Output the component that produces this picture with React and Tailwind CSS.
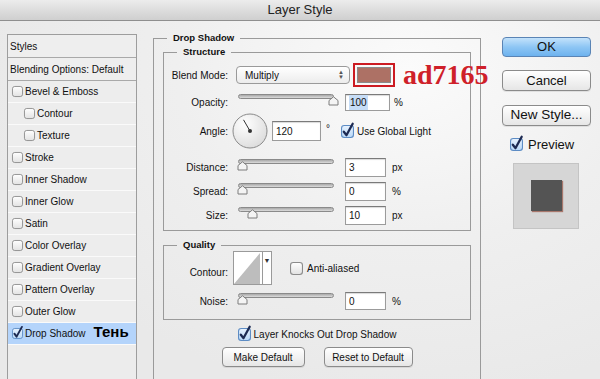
import React from 'react';

const Checkbox = ({ checked = false, size = 12 }) => (
  <svg width={size} height={size} viewBox="0 0 12 12" className="shrink-0 overflow-visible">
    <defs>
      <linearGradient id="cbg" x1="0" y1="0" x2="0" y2="1">
        <stop offset="0" stopColor="#ffffff" />
        <stop offset="1" stopColor="#e2e2e2" />
      </linearGradient>
      <linearGradient id="cbb" x1="0" y1="0" x2="0" y2="1">
        <stop offset="0" stopColor="#e8f3ff" />
        <stop offset="1" stopColor="#b9d8f7" />
      </linearGradient>
    </defs>
    <rect
      x="0.5"
      y="0.5"
      width="11"
      height="11"
      rx="2.5"
      fill={checked ? 'url(#cbb)' : 'url(#cbg)'}
      stroke={checked ? '#5d8cc4' : '#8c8c8c'}
    />
    {checked && (
      <path d="M2.6 6.2 L5 9.4 L10.8 -1.2" fill="none" stroke="#1d2a52" strokeWidth="2.1" strokeLinecap="round" strokeLinejoin="round" />
    )}
  </svg>
);

const Slider = ({ pos = 0 }) => (
  <div className="relative w-[100px] h-[14px] shrink-0">
    <div className="absolute left-[1px] right-[3px] top-[1px] h-[5px] rounded-full border border-[#8a8a8a] bg-gradient-to-b from-[#a9a9a9] to-[#dcdcdc]" />
    <svg width="11" height="10" viewBox="0 0 11 10" className="absolute top-[3px]" style={{ left: `${pos}px` }}>
      <path d="M1 4.5 L5.5 0.8 L10 4.5 L10 9 L1 9 Z" fill="#f4f4f4" stroke="#7d7d7d" strokeWidth="1" strokeLinejoin="round" />
    </svg>
  </div>
);

const Field = ({ value, w = 'w-[41px]', h = 'h-[19px]', selected = false }) => (
  <div className={`${w} ${h} shrink-0 border border-[#9b9b9b] border-t-[#7a7a7a] bg-white flex items-center pl-[3px] shadow-[inset_0_1px_1px_rgba(0,0,0,0.15)]`}>
    <span className={selected ? 'bg-[#c6ddf7] px-[1px]' : ''}>{value}</span>
  </div>
);

const Label = ({ children }) => (
  <div className="w-[64px] shrink-0 text-right">{children}</div>
);

const Button = ({ children, className = '' }) => (
  <div className={`flex items-center justify-center rounded-[4px] border border-[#8b8b8b] bg-gradient-to-b from-white to-[#e6e6e6] shadow-[0_1px_0_rgba(0,0,0,0.08)] ${className}`}>
    {children}
  </div>
);

const StyleRow = ({ label, indent = false, checked = false, active = false, extra }) => (
  <div
    className={`h-[22px] flex items-center border-b border-[#fafafa] ${indent ? 'pl-[16px]' : 'pl-[4px]'} ${active ? 'bg-[#b4d4fb]' : 'bg-[#ededed]'}`}
  >
    <Checkbox checked={checked} size={11} />
    <span className="ml-[2px]">{label}</span>
    {extra}
  </div>
);

export default function App() {
  const styles = [
    { label: 'Bevel & Emboss' },
    { label: 'Contour', indent: true },
    { label: 'Texture', indent: true },
    { label: 'Stroke' },
    { label: 'Inner Shadow' },
    { label: 'Inner Glow' },
    { label: 'Satin' },
    { label: 'Color Overlay' },
    { label: 'Gradient Overlay' },
    { label: 'Pattern Overlay' },
    { label: 'Outer Glow' },
  ];

  return (
    <div className="w-[600px] h-[379px] overflow-hidden font-['Liberation_Sans',Arial,sans-serif] text-[10px] text-[#111] bg-[radial-gradient(ellipse_at_68%_18%,#fbfbfb_0%,#efefef_40%,#e9e9e9_75%)]">
      {/* Title bar */}
      <div className="h-[21px] flex items-center justify-center border-b border-[#8f8f8f] bg-gradient-to-b from-[#ececec] to-[#cfcfcf] text-[13px] text-[#222]">
        Layer Style
      </div>

      <div className="flex items-start">
        {/* Styles list */}
        <div className="ml-[7px] mt-[13px] w-[130px] h-[360px] shrink-0 border border-[#9d9d9d] bg-[#ececec]">
          <div className="h-[23px] flex items-center pl-[2px] border-b border-[#a9a9a9] bg-[#eeeeee]">Styles</div>
          <div className="h-[23px] flex items-center pl-[2px] border-b border-[#a9a9a9] bg-[#eeeeee]">Blending Options: Default</div>
          {styles.map((s) => (
            <StyleRow key={s.label} label={s.label} indent={s.indent} />
          ))}
          <StyleRow
            label="Drop Shadow"
            checked
            active
            extra={<span className="ml-[8px] text-[15px] font-bold text-black leading-none -mt-[5px]">Тень</span>}
          />
        </div>

        {/* Drop Shadow panel */}
        <fieldset className="ml-[16px] mt-[10px] w-[328px] min-w-0 h-[360px] shrink-0 border border-[#9a9a9a] px-[9px]">
          <legend className="ml-[4px] px-[6px] font-bold text-[9.5px] leading-[14px]">Drop Shadow</legend>

          {/* Structure */}
          <fieldset className="min-w-0 border border-[#9a9a9a] pb-[3px]">
            <legend className="ml-[13px] px-[6px] font-bold text-[9.5px] leading-[14px]">Structure</legend>

            <div className="mt-[4px] h-[24px] flex items-center">
              <Label>Blend Mode:</Label>
              <div className="ml-[8px] w-[114px] h-[18px] shrink-0 rounded-[4px] border border-[#9a9a9a] bg-gradient-to-b from-white to-[#ececec] flex items-center justify-between pl-[8px] pr-[5px]">
                <span>Multiply</span>
                <span className="flex flex-col text-[6px] leading-[5px] text-[#555]">
                  <span>▲</span>
                  <span>▼</span>
                </span>
              </div>
              <div className="ml-[3px] w-[42px] h-[24px] shrink-0 border-2 border-[#cc1b22] p-[2px]">
                <div className="w-full h-full bg-[#ad7165] border border-[#8a8a8a]" />
              </div>
              <span className="ml-[8px] whitespace-nowrap font-['Liberation_Serif',serif] font-bold text-[28px] leading-none text-[#cf2029]">
                ad7165
              </span>
            </div>

            <div className="mt-[3px] h-[24px] flex items-center">
              <Label>Opacity:</Label>
              <div className="ml-[9px] -mt-[4px]">
                <Slider pos={91} />
              </div>
              <div className="ml-[8px]">
                <Field value="100" w="w-[45px]" h="h-[17px]" selected />
              </div>
              <span className="ml-[4px]">%</span>
            </div>

            <div className="h-[34px] flex items-center">
              <Label>Angle:</Label>
              <svg width="36" height="36" viewBox="0 0 36 36" className="ml-[4px] shrink-0">
                <defs>
                  <radialGradient id="dial" cx="0.35" cy="0.3" r="0.8">
                    <stop offset="0" stopColor="#ffffff" />
                    <stop offset="1" stopColor="#dadada" />
                  </radialGradient>
                </defs>
                <circle cx="18" cy="18" r="17" fill="url(#dial)" stroke="#8a8a8a" />
                <line x1="18" y1="18" x2="11.5" y2="6.8" stroke="#333" strokeWidth="1" />
                <circle cx="18" cy="18" r="2" fill="#333" />
              </svg>
              <div className="ml-[4px]">
                <Field value="120" w="w-[49px]" h="h-[20px]" />
              </div>
              <span className="ml-[5px] -mt-[6px]">°</span>
              <div className="ml-[11px]">
                <Checkbox checked size={13} />
              </div>
              <span className="ml-[3px]">Use Global Light</span>
            </div>

            <div className="mt-[7px] h-[24px] flex items-center">
              <Label>Distance:</Label>
              <div className="ml-[9px] -mt-[4px]">
                <Slider pos={0} />
              </div>
              <div className="ml-[8px]">
                <Field value="3" />
              </div>
              <span className="ml-[6px]">px</span>
            </div>

            <div className="h-[24px] flex items-center">
              <Label>Spread:</Label>
              <div className="ml-[9px] -mt-[4px]">
                <Slider pos={0} />
              </div>
              <div className="ml-[8px]">
                <Field value="0" />
              </div>
              <span className="ml-[6px]">%</span>
            </div>

            <div className="h-[24px] flex items-center">
              <Label>Size:</Label>
              <div className="ml-[9px] -mt-[4px]">
                <Slider pos={10} />
              </div>
              <div className="ml-[8px]">
                <Field value="10" />
              </div>
              <span className="ml-[6px]">px</span>
            </div>
          </fieldset>

          {/* Quality */}
          <fieldset className="min-w-0 mt-[7px] border border-[#9a9a9a] pb-[8px]">
            <legend className="ml-[13px] px-[6px] font-bold text-[9.5px] leading-[14px]">Quality</legend>

            <div className="-mt-[1px] h-[34px] flex items-center">
              <Label>
                <span className="relative top-[4px]">Contour:</span>
              </Label>
              <div className="ml-[5px] w-[39px] h-[34px] shrink-0 flex border border-[#9a9a9a] bg-white">
                <svg width="28" height="32" viewBox="0 0 28 32" className="shrink-0">
                  <path d="M0 32 L26 1 L26 32 Z" fill="#bdbdbd" />
                </svg>
                <div className="flex-1 border-l border-[#9a9a9a] flex justify-center pt-[5px] text-[7px] leading-none text-[#333]">▼</div>
              </div>
              <div className="ml-[18px]">
                <Checkbox size={13} />
              </div>
              <span className="ml-[4px]">Anti-aliased</span>
            </div>

            <div className="mt-[6px] h-[20px] flex items-center">
              <Label>Noise:</Label>
              <div className="ml-[9px] -mt-[4px]">
                <Slider pos={0} />
              </div>
              <div className="ml-[8px]">
                <Field value="0" h="h-[18px]" />
              </div>
              <span className="ml-[6px]">%</span>
            </div>
          </fieldset>

          <div className="mt-[5px] h-[18px] flex items-center justify-center">
            <Checkbox checked size={13} />
            <span className="ml-[3px]">Layer Knocks Out Drop Shadow</span>
          </div>

          <div className="mt-[4px] flex justify-center gap-[19px]">
            <Button className="w-[83px] h-[20px]">Make Default</Button>
            <Button className="w-[89px] h-[20px]">Reset to Default</Button>
          </div>
        </fieldset>

        {/* Right column */}
        <div className="ml-[21px] mt-[16px] w-[89px] shrink-0 flex flex-col">
          <div className="h-[20px] flex items-center justify-center rounded-[4px] border border-[#5a84b5] bg-gradient-to-b from-[#c3e2fb] via-[#8ec6f4] to-[#6db2ee] text-[13px]">
            OK
          </div>
          <Button className="mt-[13px] h-[21px] text-[13px]">Cancel</Button>
          <Button className="mt-[14px] h-[21px] text-[13.5px]">New Style...</Button>
          <div className="mt-[9px] ml-[8px] flex items-center">
            <Checkbox checked size={13} />
            <span className="ml-[5px] text-[13px]">Preview</span>
          </div>
          <div className="mt-[8px] ml-[11px] w-[66px] h-[66px] flex items-center justify-center border border-[#c4c4c4] bg-[#d6d6d6]">
            <div className="w-[31px] h-[31px] bg-[#545454] shadow-[1px_1px_1px_#a8776c]" />
          </div>
        </div>
      </div>
    </div>
  );
}
